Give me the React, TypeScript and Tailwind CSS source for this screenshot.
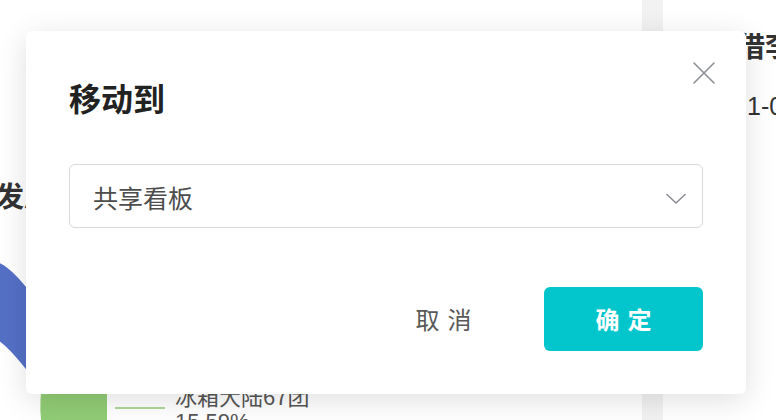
import React from "react";

const cjk = "font-['Noto_Sans_CJK_SC',sans-serif]";

const CloseIcon = () => (
  <svg width="22" height="22" viewBox="0 0 22 22" fill="none">
    <path d="M1 1L21 21M21 1L1 21" stroke="#8c8f93" strokeWidth="1.6" strokeLinecap="round" />
  </svg>
);

const Chevron = () => (
  <svg width="20" height="12" viewBox="0 0 20 12" fill="none">
    <path d="M1 1.5L10 10L19 1.5" stroke="#8c8f93" strokeWidth="1.6" strokeLinecap="round" strokeLinejoin="round" />
  </svg>
);

const PieChart = () => (
  <svg width="400" height="205" viewBox="0 215 400 205" className="block">
    <path d="M-10 260 C 4 262, 16 274, 30 292 L 60 340 L 40 385 C 25 370, 10 345, -10 335 Z" fill="#5470c6" />
    <path d="M43 380 L107 380 L107 420 L41 420 Q 39 400 43 380 Z" fill="#91cc75" />
    <path d="M115 408 L165 408" stroke="#91cc75" strokeWidth="1.6" />
    <text x="175" y="405" fill="#555" fontSize="22" fontFamily="'Noto Sans CJK SC', sans-serif">冰箱大陆67团</text>
    <text x="175" y="429" fill="#555" fontSize="22" fontFamily="'Liberation Sans', 'Noto Sans CJK SC', sans-serif">15.59%</text>
  </svg>
);

export default function App() {
  return (
    <div className={`relative w-[776px] h-[420px] overflow-hidden bg-white flex ${cjk}`}>
      {/* page behind the dialog */}
      <div className="w-[642px] shrink-0 bg-white flex flex-col pt-[175px]">
        <h2 className="-ml-[4px] text-[28px] leading-[40px] font-bold text-[#333]">发展趋势</h2>
        <PieChart />
      </div>
      <div className="w-[21px] shrink-0 bg-[#f2f2f2]" />
      <div className="flex-1 bg-white pl-[74px] pt-[27px] whitespace-nowrap">
        <div className="text-[28px] leading-[36px] font-bold text-[#333]">借李</div>
        <div className="mt-[28px] pl-[10px] text-[25px] leading-[30px] text-[#333] font-['Liberation_Sans',sans-serif]">1-01</div>
      </div>

      {/* dialog */}
      <div className="absolute left-[26px] top-[31px] w-[720px] bg-white rounded-[6px] shadow-[0_6px_30px_rgba(0,0,0,0.13)] px-[43px] pt-[46px] pb-[43px]">
        <button className="absolute top-[31px] right-[31px] w-[22px] h-[22px] flex items-center justify-center">
          <CloseIcon />
        </button>
        <h3 className="text-[32px] leading-[40px] font-bold text-[#222]">移动到</h3>
        <div className="mt-[47px] h-[64px] border border-[#d9d9d9] rounded-[6px] flex items-center justify-between pl-[23px] pr-[16px]">
          <span className="text-[25px] text-[#4d4d4d] pt-[3px]">共享看板</span>
          <span className="pt-[5px]"><Chevron /></span>
        </div>
        <div className="mt-[59px] flex justify-end gap-[21px]">
          <button className="w-[159px] h-[64px] flex items-center justify-center text-[24px] text-[#595959] tracking-[8px] pl-[8px]">
            取消
          </button>
          <button className="w-[159px] h-[64px] rounded-[6px] bg-[#03c5cc] flex items-center justify-center text-[24px] font-bold text-white tracking-[8px] pl-[8px]">
            确定
          </button>
        </div>
      </div>
    </div>
  );
}
